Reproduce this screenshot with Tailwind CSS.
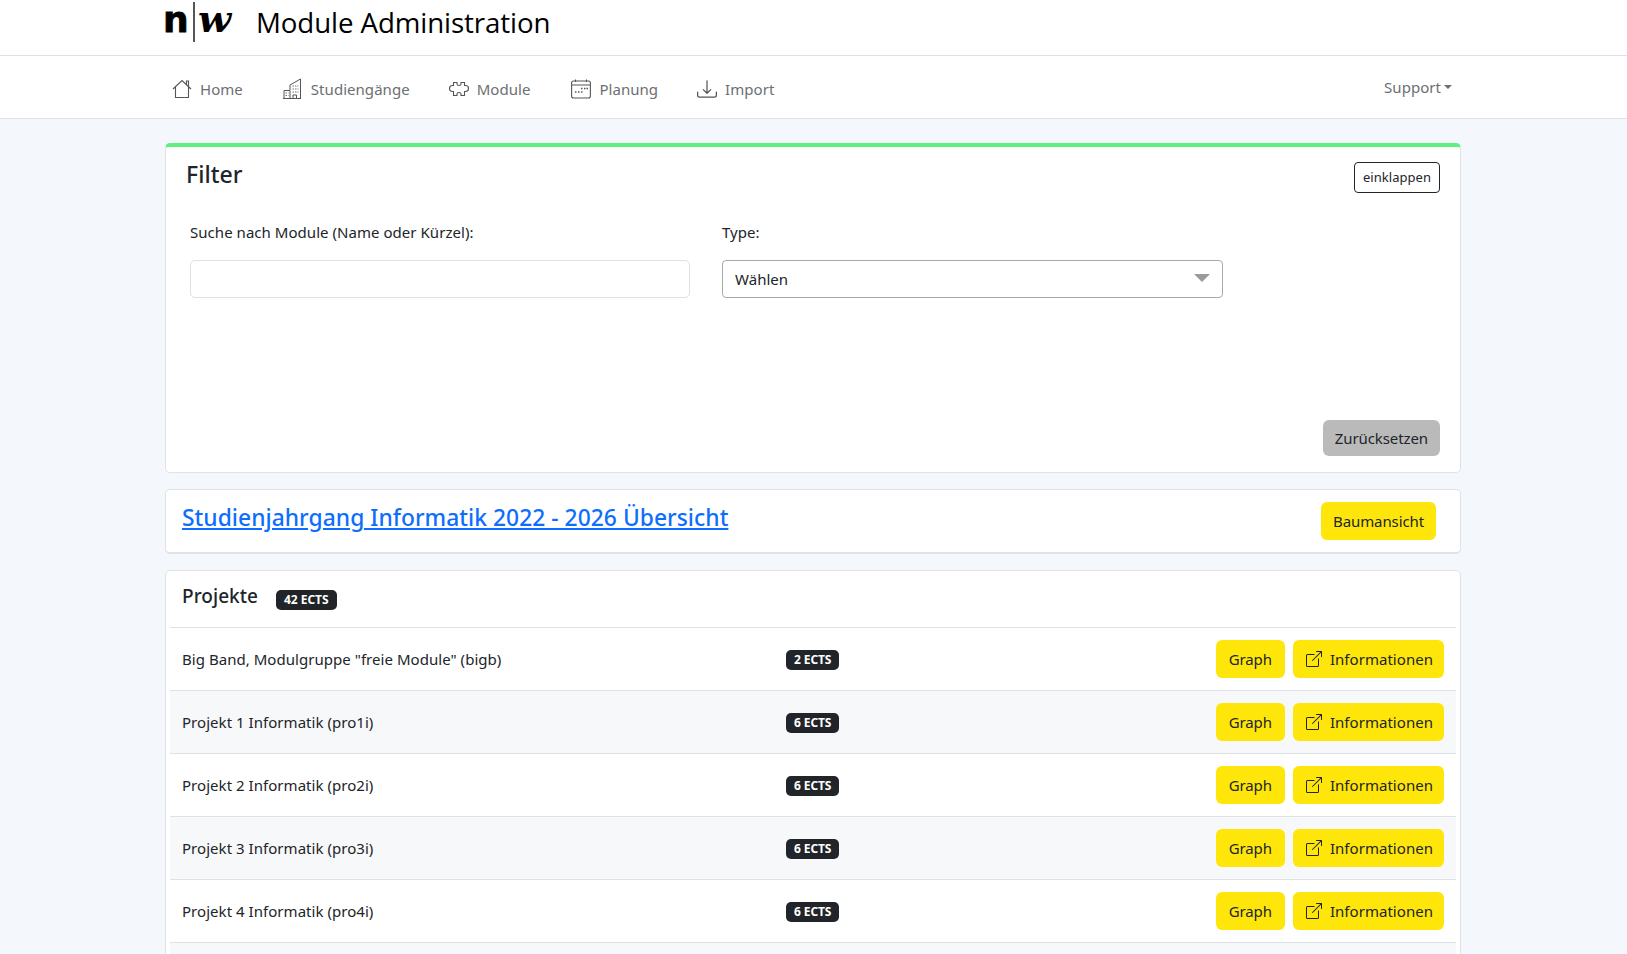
<!DOCTYPE html>
<html lang="de">

<head>
    <meta charset="UTF-8">
    <meta name="viewport" content="width=device-width, initial-scale=1.0">
    <title>Module Administration</title>
    <script src="https://cdn.jsdelivr.net/npm/@tailwindcss/browser@4"></script>
</head>

<body class="bg-[#f4f7fb] font-['Noto_Sans',sans-serif] text-[15px] tracking-[0.04px] text-[#212529] h-screen overflow-hidden">
    <!-- top header -->
    <header class="bg-white h-[56px] border-b border-[#dee2e6] pl-[165px] flex items-start">
        <div class="flex items-start w-[91px] h-[44px] text-black">
            <span class="font-['DejaVu_Sans',sans-serif] font-bold text-[36px] leading-[36px] w-[30px] -ml-[2px] mt-[2px] [-webkit-text-stroke:0.8px_black]">n</span>
            <span class="w-[1.500px] h-[40px] bg-[#555] mr-[3px] mt-[2px]"></span>
            <span class="font-['DejaVu_Serif',serif] italic font-bold text-[35px] leading-[36px] mt-[2px] origin-left scale-x-[1.1]">w</span>
        </div>
        <h1 class="text-[27.700px] font-medium tracking-[-0.1px] text-black font-['Open_Sans',sans-serif] self-center -mt-[10px]">Module Administration</h1>
    </header>

    <!-- nav -->
    <nav class="bg-white h-[63px] border-b border-[#dee2e6] pl-[172px] pr-[175px] pt-[4px] flex items-center text-[#6c6f73] text-[15px]">
        <a class="flex items-center gap-[8px] mr-[39px]">
            <svg class="w-[20px] h-[20px]" viewBox="0 0 20 20" fill="none" stroke="#555" stroke-width="1.1"><path d="M1 10 10 1.500 19 10M3.500 8v10.500h13V8M14.500 5.500V2h2v5.500"/></svg>
            Home
        </a>
        <a class="flex items-center gap-[9px] mr-[39px]">
            <svg class="w-[20px] h-[22px]" viewBox="0 0 20 22" fill="none" stroke="#555" stroke-width="1"><path d="M1 20.500h18M2 20.500v-8h6v8M8 12V7L18.500 1v19.500M11 20.500v-3.500h3.500v3.500"/><path d="M3.500 15h3M3.500 17.500h3M10.500 8h6M10.500 11h6M10.500 14h6" stroke="#777" stroke-dasharray="1.500 1"/></svg>
            Studiengänge
        </a>
        <a class="flex items-center gap-[8px] mr-[41px]">
            <svg class="w-[20px] h-[18px]" viewBox="-1 -1 20 18" fill="none" stroke="#555" stroke-width="1.1"><path d="M3.500 4.500V1.500h3.500v1.500a2 1.500 0 0 0 4 0V1.500h3.500v3h1a2.500 2.500 0 0 1 0 6h-1v4h-3.500v-1.500a2 1.500 0 0 0-4 0v1.500H3.500v-4h-1a2.500 2.500 0 0 1 0-6z"/></svg>
            Module
        </a>
        <a class="flex items-center gap-[8px] mr-[39px]">
            <svg class="w-[20px] h-[20px]" viewBox="0 0 20 20" fill="none" stroke="#555" stroke-width="1.1"><rect x="0.600" y="2" width="18.800" height="17" rx="2"/><path d="M1 6h18M4.500 0.500V3M15.500 0.500V3"/><path d="M10 9.500h1.500M13 9.500h1.500M15.500 9.500h1.500M4 13h1.500M7 13h1.500M10 13h1.500" stroke-width="1.500"/></svg>
            Planung
        </a>
        <a class="flex items-center gap-[8px]">
            <svg class="w-[20px] h-[20px]" viewBox="0 0 16 16" fill="#555"><path d="M.5 9.900a.5.5 0 0 1 .5.5v2.500a1 1 0 0 0 1 1h12a1 1 0 0 0 1-1v-2.500a.5.5 0 0 1 1 0v2.500a2 2 0 0 1-2 2H2a2 2 0 0 1-2-2v-2.500a.5.5 0 0 1 .5-.5z"/><path d="M7.646 11.854a.5.5 0 0 0 .708 0l3-3a.5.5 0 0 0-.708-.708L8.500 10.293V1.500a.5.5 0 0 0-1 0v8.793L5.354 8.146a.5.5 0 1 0-.708.708l3 3z"/></svg>
            Import
        </a>
        <a class="ml-auto flex items-center gap-[3px] -mt-[4px]">
            Support
            <span class="w-0 h-0 border-x-[4px] border-x-transparent border-t-[4px] border-t-[#6c6f73]"></span>
        </a>
    </nav>

    <main class="ml-[165px] mr-[166px] mt-[24px] flex flex-col gap-[16px]">
        <!-- filter -->
        <section class="bg-white h-[330px] rounded-[5px] border border-[#dfe2e6] border-t-[4px] border-t-[#5ff07f] px-[20px] flex flex-col">
            <div class="flex justify-between items-start pt-[15px]">
                <h2 class="text-[23px] font-medium text-[#212529] leading-[30px] -mt-[3px]">Filter</h2>
                <button class="border border-[#212529] rounded-[4px] h-[31px] px-[8px] text-[13px] bg-white">einklappen</button>
            </div>
            <div class="flex gap-[32px] pl-[4px] mt-[26px]">
                <div class="w-[500px]">
                    <label class="block leading-[26px] mb-[15px]">Suche nach Module (Name oder Kürzel):</label>
                    <div class="h-[38px] border border-[#dee2e6] rounded-[5px] bg-white"></div>
                </div>
                <div class="w-[501px]">
                    <label class="block leading-[26px] mb-[15px]">Type:</label>
                    <div class="h-[38px] border border-[#a9a9a9] rounded-[4px] bg-white flex items-center justify-between pl-[12px] pr-[12px]">
                        Wählen
                        <span class="w-0 h-0 border-x-[8px] border-x-transparent border-t-[8px] border-t-[#9a9a9a] -mt-[3px]"></span>
                    </div>
                </div>
            </div>
            <div class="mt-auto mb-[16px] flex justify-end">
                <button class="bg-[#bababa] rounded-[6px] h-[36px] px-[12px] text-[15px] tracking-[-0.1px]">Zurücksetzen</button>
            </div>
        </section>

        <!-- overview -->
        <section class="bg-white h-[65px] rounded-[5px] border border-[#dfe2e6] border-b-2 pl-[16px] pr-[24px] flex items-center justify-between">
            <a class="text-[22.800px] font-medium text-[#0d6efd] underline -mt-[6px]" href="#">Studienjahrgang Informatik 2022 - 2026 Übersicht</a>
            <button class="bg-[#ffe60a] rounded-[6px] h-[38px] px-[12px] text-[15px] tracking-[-0.1px]">Baumansicht</button>
        </section>

        <!-- projekte -->
        <section class="bg-white rounded-t-[5px] border border-[#dfe2e6] px-[4px]">
            <div class="h-[57px] border-b border-[#dee2e6] pl-[12px] flex items-center">
                <h3 class="text-[19px] font-medium -mt-[5px]">Projekte</h3>
                <span class="ml-[18px] mt-[2px] bg-[#212529] text-white text-[12px] font-bold rounded-[5px] h-[20px] px-[8px] flex items-center tracking-[-0.05px]">42 ECTS</span>
            </div>
            <div class="h-[63px] border-b border-[#dee2e6] pl-[12px] pr-[12px] flex items-center">
                <span class="w-[604px]">Big Band, Modulgruppe "freie Module" (bigb)</span>
                <span class="bg-[#212529] text-white text-[12px] font-bold rounded-[5px] h-[20px] mt-[2px] px-[8px] flex items-center tracking-[-0.1px]">2 ECTS</span>
                <button class="ml-auto bg-[#ffe60a] rounded-[6px] h-[38px] px-[13px] text-[15px] tracking-[-0.1px]">Graph</button>
                <button class="ml-[8px] bg-[#ffe60a] rounded-[6px] h-[38px] pl-[13px] pr-[11px] text-[15px] flex items-center gap-[8px]">
                    <svg class="w-[16px] h-[16px]" viewBox="0 0 16 16" fill="currentColor"><path fill-rule="evenodd" d="M8.636 3.500a.5.5 0 0 0-.5-.5H1.500A1.500 1.500 0 0 0 0 4.500v10A1.500 1.500 0 0 0 1.500 16h10a1.500 1.500 0 0 0 1.500-1.500V7.864a.5.5 0 0 0-1 0V14.500a.5.5 0 0 1-.5.5h-10a.5.5 0 0 1-.5-.5v-10a.5.5 0 0 1 .5-.5h6.636a.5.5 0 0 0 .5-.5z"/><path fill-rule="evenodd" d="M16 .5a.5.5 0 0 0-.5-.5h-5a.5.5 0 0 0 0 1h3.793L6.146 9.146a.5.5 0 1 0 .708.708L15 1.707V5.500a.5.5 0 0 0 1 0v-5z"/></svg>
                    Informationen
                </button>
            </div>
            <div class="h-[63px] border-b border-[#dee2e6] bg-[#f7f8fa] pl-[12px] pr-[12px] flex items-center">
                <span class="w-[604px]">Projekt 1 Informatik (pro1i)</span>
                <span class="bg-[#212529] text-white text-[12px] font-bold rounded-[5px] h-[20px] mt-[2px] px-[8px] flex items-center tracking-[-0.1px]">6 ECTS</span>
                <button class="ml-auto bg-[#ffe60a] rounded-[6px] h-[38px] px-[13px] text-[15px] tracking-[-0.1px]">Graph</button>
                <button class="ml-[8px] bg-[#ffe60a] rounded-[6px] h-[38px] pl-[13px] pr-[11px] text-[15px] flex items-center gap-[8px]">
                    <svg class="w-[16px] h-[16px]" viewBox="0 0 16 16" fill="currentColor"><path fill-rule="evenodd" d="M8.636 3.500a.5.5 0 0 0-.5-.5H1.500A1.500 1.500 0 0 0 0 4.500v10A1.500 1.500 0 0 0 1.500 16h10a1.500 1.500 0 0 0 1.500-1.500V7.864a.5.5 0 0 0-1 0V14.500a.5.5 0 0 1-.5.5h-10a.5.5 0 0 1-.5-.5v-10a.5.5 0 0 1 .5-.5h6.636a.5.5 0 0 0 .5-.5z"/><path fill-rule="evenodd" d="M16 .5a.5.5 0 0 0-.5-.5h-5a.5.5 0 0 0 0 1h3.793L6.146 9.146a.5.5 0 1 0 .708.708L15 1.707V5.500a.5.5 0 0 0 1 0v-5z"/></svg>
                    Informationen
                </button>
            </div>
            <div class="h-[63px] border-b border-[#dee2e6] pl-[12px] pr-[12px] flex items-center">
                <span class="w-[604px]">Projekt 2 Informatik (pro2i)</span>
                <span class="bg-[#212529] text-white text-[12px] font-bold rounded-[5px] h-[20px] mt-[2px] px-[8px] flex items-center tracking-[-0.1px]">6 ECTS</span>
                <button class="ml-auto bg-[#ffe60a] rounded-[6px] h-[38px] px-[13px] text-[15px] tracking-[-0.1px]">Graph</button>
                <button class="ml-[8px] bg-[#ffe60a] rounded-[6px] h-[38px] pl-[13px] pr-[11px] text-[15px] flex items-center gap-[8px]">
                    <svg class="w-[16px] h-[16px]" viewBox="0 0 16 16" fill="currentColor"><path fill-rule="evenodd" d="M8.636 3.500a.5.5 0 0 0-.5-.5H1.500A1.500 1.500 0 0 0 0 4.500v10A1.500 1.500 0 0 0 1.500 16h10a1.500 1.500 0 0 0 1.500-1.500V7.864a.5.5 0 0 0-1 0V14.500a.5.5 0 0 1-.5.5h-10a.5.5 0 0 1-.5-.5v-10a.5.5 0 0 1 .5-.5h6.636a.5.5 0 0 0 .5-.5z"/><path fill-rule="evenodd" d="M16 .5a.5.5 0 0 0-.5-.5h-5a.5.5 0 0 0 0 1h3.793L6.146 9.146a.5.5 0 1 0 .708.708L15 1.707V5.500a.5.5 0 0 0 1 0v-5z"/></svg>
                    Informationen
                </button>
            </div>
            <div class="h-[63px] border-b border-[#dee2e6] bg-[#f7f8fa] pl-[12px] pr-[12px] flex items-center">
                <span class="w-[604px]">Projekt 3 Informatik (pro3i)</span>
                <span class="bg-[#212529] text-white text-[12px] font-bold rounded-[5px] h-[20px] mt-[2px] px-[8px] flex items-center tracking-[-0.1px]">6 ECTS</span>
                <button class="ml-auto bg-[#ffe60a] rounded-[6px] h-[38px] px-[13px] text-[15px] tracking-[-0.1px]">Graph</button>
                <button class="ml-[8px] bg-[#ffe60a] rounded-[6px] h-[38px] pl-[13px] pr-[11px] text-[15px] flex items-center gap-[8px]">
                    <svg class="w-[16px] h-[16px]" viewBox="0 0 16 16" fill="currentColor"><path fill-rule="evenodd" d="M8.636 3.500a.5.5 0 0 0-.5-.5H1.500A1.500 1.500 0 0 0 0 4.500v10A1.500 1.500 0 0 0 1.500 16h10a1.500 1.500 0 0 0 1.500-1.500V7.864a.5.5 0 0 0-1 0V14.500a.5.5 0 0 1-.5.5h-10a.5.5 0 0 1-.5-.5v-10a.5.5 0 0 1 .5-.5h6.636a.5.5 0 0 0 .5-.5z"/><path fill-rule="evenodd" d="M16 .5a.5.5 0 0 0-.5-.5h-5a.5.5 0 0 0 0 1h3.793L6.146 9.146a.5.5 0 1 0 .708.708L15 1.707V5.500a.5.5 0 0 0 1 0v-5z"/></svg>
                    Informationen
                </button>
            </div>
            <div class="h-[63px] border-b border-[#dee2e6] pl-[12px] pr-[12px] flex items-center">
                <span class="w-[604px]">Projekt 4 Informatik (pro4i)</span>
                <span class="bg-[#212529] text-white text-[12px] font-bold rounded-[5px] h-[20px] mt-[2px] px-[8px] flex items-center tracking-[-0.1px]">6 ECTS</span>
                <button class="ml-auto bg-[#ffe60a] rounded-[6px] h-[38px] px-[13px] text-[15px] tracking-[-0.1px]">Graph</button>
                <button class="ml-[8px] bg-[#ffe60a] rounded-[6px] h-[38px] pl-[13px] pr-[11px] text-[15px] flex items-center gap-[8px]">
                    <svg class="w-[16px] h-[16px]" viewBox="0 0 16 16" fill="currentColor"><path fill-rule="evenodd" d="M8.636 3.500a.5.5 0 0 0-.5-.5H1.500A1.500 1.500 0 0 0 0 4.500v10A1.500 1.500 0 0 0 1.500 16h10a1.500 1.500 0 0 0 1.500-1.500V7.864a.5.5 0 0 0-1 0V14.500a.5.5 0 0 1-.5.5h-10a.5.5 0 0 1-.5-.5v-10a.5.5 0 0 1 .5-.5h6.636a.5.5 0 0 0 .5-.5z"/><path fill-rule="evenodd" d="M16 .5a.5.5 0 0 0-.5-.5h-5a.5.5 0 0 0 0 1h3.793L6.146 9.146a.5.5 0 1 0 .708.708L15 1.707V5.500a.5.5 0 0 0 1 0v-5z"/></svg>
                    Informationen
                </button>
            </div>
            <div class="h-[63px] bg-[#f7f8fa]"></div>
        </section>
    </main>
</body>

</html>
